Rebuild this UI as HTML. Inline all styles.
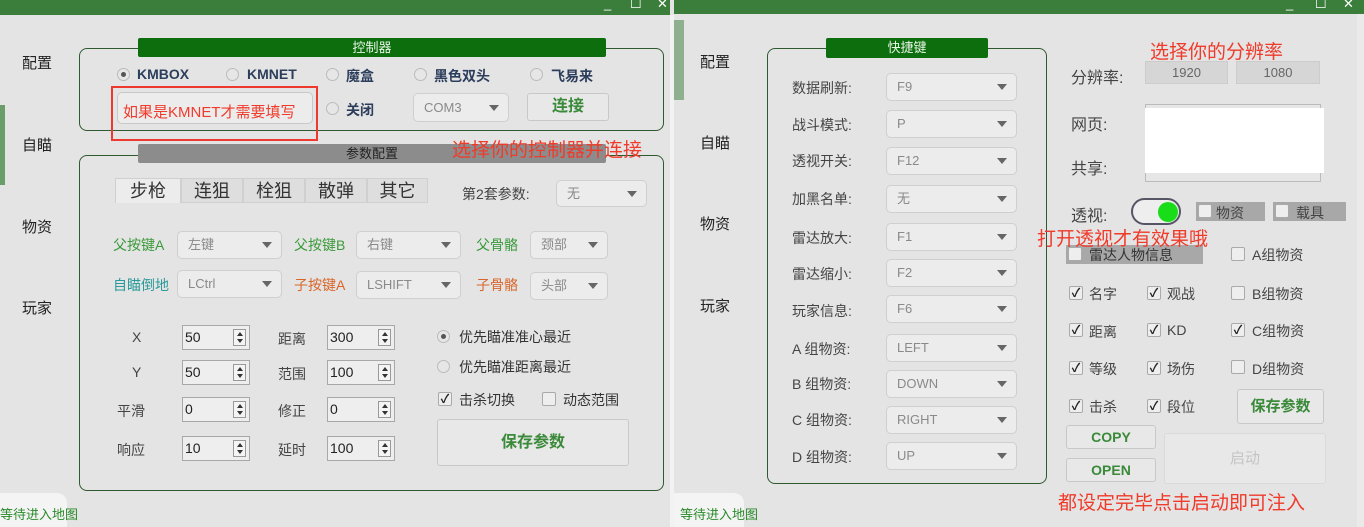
<!DOCTYPE html>
<html><head><meta charset="utf-8"><style>
*{box-sizing:border-box;margin:0;padding:0}
body{width:1364px;height:527px;overflow:hidden;background:#e4e4e4;position:relative;font-family:"Liberation Sans","Microsoft YaHei","Noto Sans CJK SC",sans-serif;font-size:14px;color:#333}
.a{position:absolute;white-space:nowrap}
.bar{background:#3b7d3b}
.grp{position:absolute;border:1.5px solid #2f5a2f;border-radius:8px}
.hdr{position:absolute;background:#0c6e0c;color:#e8f5e8;text-align:center;font-size:13px;line-height:19px;border-radius:2px}
.cb{position:absolute;background:#ececec;border:1px solid #cfcfcf;border-radius:5px;color:#8a8a8a;font-size:13px;padding-left:10px}
.cb::after{content:"";position:absolute;right:9px;top:50%;margin-top:-3px;border-left:5px solid transparent;border-right:5px solid transparent;border-top:6px solid #666}
.rd{position:absolute;width:13px;height:13px;border-radius:50%;border:1px solid #bbb;background:#e6e6e6}
.rd.on::after{content:"";position:absolute;left:3px;top:3px;width:5px;height:5px;border-radius:50%;background:#555}
.ck{position:absolute;width:14px;height:14px;border:1px solid #aaa;border-radius:2px;background:#eee;font-size:12px;line-height:12px;text-align:center;color:#222;font-weight:bold}
.btn{position:absolute;background:#e8e8e8;border:1px solid #c8c8c8;border-radius:3px;text-align:center;color:#3a8a3a;font-weight:bold}
.sp{position:absolute;width:68px;height:25px;background:#eee;border:1px solid #a8a8a8;font-size:14px;line-height:23px;padding-left:2px;color:#222}
.sp i{position:absolute;right:3px;top:3px;width:13px;height:17px;border:1px solid #999;background:#f4f4f4}
.sp i::before{content:"";position:absolute;left:3px;top:2px;border-left:3px solid transparent;border-right:3px solid transparent;border-bottom:4px solid #333}
.sp i::after{content:"";position:absolute;left:3px;bottom:2px;border-left:3px solid transparent;border-right:3px solid transparent;border-top:4px solid #333}
.red{color:#f03a2a;font-size:19px;z-index:5}
.side{font-size:15px;color:#222}
.lb{font-size:14px;color:#444}
.tab{position:absolute;top:178px;height:25px;background:#dedede;border:1px solid #d0d0d0;font-size:18px;color:#333;text-align:center;line-height:25px}
.wc{position:absolute;top:-4px;color:#fff;font-size:13px}
</style></head><body>
<!-- LEFT PANEL -->
<div class="a bar" style="left:0;top:0;width:670px;height:15px"></div>
<div class="wc" style="left:604px">_</div><div class="wc" style="left:630px">☐</div><div class="wc" style="left:657px">✕</div>
<div class="a" style="left:670px;top:15px;width:4px;height:512px;background:#f2f2f2"></div>
<div class="a" style="left:0;top:105px;width:5px;height:80px;background:#6a9d6a"></div>
<div class="a side" style="left:22px;top:52px">配置</div>
<div class="a side" style="left:22px;top:134px">自瞄</div>
<div class="a side" style="left:22px;top:216px">物资</div>
<div class="a side" style="left:22px;top:297px">玩家</div>

<div class="grp" style="left:79px;top:48px;width:585px;height:83px"></div>
<div class="hdr" style="left:138px;top:38px;width:468px;height:19px">控制器</div>
<div class="rd on" style="left:117px;top:68px"></div><div class="a" style="left:137px;top:66px;font-weight:bold;color:#2c3e5c">KMBOX</div>
<div class="rd" style="left:226px;top:68px"></div><div class="a" style="left:247px;top:66px;font-weight:bold;color:#2c3e5c">KMNET</div>
<div class="rd" style="left:326px;top:68px"></div><div class="a" style="left:346px;top:66px;font-weight:bold;color:#2c3e5c">魔盒</div>
<div class="rd" style="left:414px;top:68px"></div><div class="a" style="left:434px;top:66px;font-weight:bold;color:#2c3e5c">黑色双头</div>
<div class="rd" style="left:530px;top:68px"></div><div class="a" style="left:551px;top:66px;font-weight:bold;color:#2c3e5c">飞易来</div>
<div class="a" style="left:117px;top:92px;width:196px;height:32px;background:#ececec;border:1px solid #c8c8c8;border-radius:5px"></div>
<div class="a" style="left:111px;top:86px;width:207px;height:55px;border:2px solid #ee3a2e"></div>
<div class="a" style="left:123px;top:101px;color:#f03a2a;font-size:15px">如果是KMNET才需要填写</div>
<div class="rd" style="left:326px;top:102px"></div><div class="a" style="left:346px;top:100px;font-weight:bold;color:#2c3e5c">关闭</div>
<div class="cb" style="left:413px;top:93px;width:96px;height:29px;line-height:27px">COM3</div>
<div class="btn" style="left:527px;top:93px;width:82px;height:28px;line-height:26px;font-size:16px">连接</div>

<div class="grp" style="left:79px;top:155px;width:585px;height:336px"></div>
<div class="hdr" style="left:138px;top:144px;width:468px;height:19px;background:#8c8c8c;color:#222">参数配置</div>
<div class="a red" style="left:452px;top:135px">选择你的控制器并连接</div>
<div class="tab" style="left:115px;width:66px;background:#ececec;border-bottom:none">步枪</div>
<div class="tab" style="left:181px;width:62px">连狙</div>
<div class="tab" style="left:243px;width:62px">栓狙</div>
<div class="tab" style="left:305px;width:62px">散弹</div>
<div class="tab" style="left:367px;width:61px">其它</div>
<div class="a lb" style="left:462px;top:184px">第2套参数:</div>
<div class="cb" style="left:556px;top:180px;width:91px;height:27px;line-height:25px">无</div>

<div class="a" style="left:113px;top:235px;color:#3a9a3a">父按键A</div>
<div class="cb" style="left:177px;top:231px;width:105px;height:28px;line-height:26px">左键</div>
<div class="a" style="left:294px;top:235px;color:#3a9a3a">父按键B</div>
<div class="cb" style="left:356px;top:231px;width:105px;height:28px;line-height:26px">右键</div>
<div class="a" style="left:476px;top:235px;color:#3a9a3a">父骨骼</div>
<div class="cb" style="left:530px;top:231px;width:78px;height:28px;line-height:26px">颈部</div>
<div class="a" style="left:113px;top:275px;color:#2a9a9a">自瞄倒地</div>
<div class="cb" style="left:177px;top:270px;width:105px;height:28px;line-height:26px">LCtrl</div>
<div class="a" style="left:294px;top:275px;color:#d8662a">子按键A</div>
<div class="cb" style="left:356px;top:271px;width:105px;height:28px;line-height:26px">LSHIFT</div>
<div class="a" style="left:476px;top:275px;color:#d8662a">子骨骼</div>
<div class="cb" style="left:530px;top:272px;width:78px;height:28px;line-height:26px">头部</div>

<div class="a lb" style="left:132px;top:329px">X</div><div class="sp" style="left:182px;top:325px">50<i></i></div>
<div class="a lb" style="left:278px;top:329px">距离</div><div class="sp" style="left:327px;top:325px">300<i></i></div>
<div class="a lb" style="left:132px;top:364px">Y</div><div class="sp" style="left:182px;top:360px">50<i></i></div>
<div class="a lb" style="left:278px;top:364px">范围</div><div class="sp" style="left:327px;top:360px">100<i></i></div>
<div class="a lb" style="left:117px;top:401px">平滑</div><div class="sp" style="left:182px;top:397px">0<i></i></div>
<div class="a lb" style="left:278px;top:401px">修正</div><div class="sp" style="left:327px;top:397px">0<i></i></div>
<div class="a lb" style="left:117px;top:440px">响应</div><div class="sp" style="left:182px;top:436px">10<i></i></div>
<div class="a lb" style="left:278px;top:440px">延时</div><div class="sp" style="left:327px;top:436px">100<i></i></div>

<div class="rd on" style="left:437px;top:330px"></div><div class="a lb" style="left:459px;top:327px;color:#333">优先瞄准准心最近</div>
<div class="rd" style="left:437px;top:360px"></div><div class="a lb" style="left:459px;top:357px;color:#333">优先瞄准距离最近</div>
<div class="ck" style="left:438px;top:392px">✓</div><div class="a lb" style="left:459px;top:390px;color:#333">击杀切换</div>
<div class="ck" style="left:542px;top:392px"></div><div class="a lb" style="left:563px;top:390px;color:#333">动态范围</div>
<div class="btn" style="left:437px;top:419px;width:192px;height:47px;line-height:45px;font-size:16px">保存参数</div>

<div class="a" style="left:0;top:493px;width:67px;height:34px;background:#f4f4f4;border-radius:0 10px 0 0"></div>
<div class="a" style="left:0;top:504px;color:#2a8a2a;font-size:13px">等待进入地图</div>

<!-- RIGHT PANEL -->
<div class="a bar" style="left:674px;top:0;width:690px;height:14px"></div>
<div class="wc" style="left:1286px">_</div><div class="wc" style="left:1315px">☐</div><div class="wc" style="left:1343px">✕</div>
<div class="a" style="left:674px;top:20px;width:10px;height:80px;background:#8fb08f"></div>
<div class="a" style="left:1357px;top:14px;width:7px;height:513px;background:#eaeaea"></div>
<div class="a side" style="left:700px;top:51px">配置</div>
<div class="a side" style="left:700px;top:132px">自瞄</div>
<div class="a side" style="left:700px;top:213px">物资</div>
<div class="a side" style="left:700px;top:295px">玩家</div>

<div class="grp" style="left:767px;top:48px;width:280px;height:436px"></div>
<div class="hdr" style="left:826px;top:38px;width:162px;height:20px">快捷键</div>
<div class="a lb" style="left:792px;top:78px">数据刷新:</div><div class="cb" style="left:886px;top:73px;width:131px;height:28px;line-height:26px">F9</div>
<div class="a lb" style="left:792px;top:115px">战斗模式:</div><div class="cb" style="left:886px;top:110px;width:131px;height:28px;line-height:26px">P</div>
<div class="a lb" style="left:792px;top:151px">透视开关:</div><div class="cb" style="left:886px;top:147px;width:131px;height:28px;line-height:26px">F12</div>
<div class="a lb" style="left:792px;top:189px">加黑名单:</div><div class="cb" style="left:886px;top:185px;width:131px;height:28px;line-height:26px">无</div>
<div class="a lb" style="left:792px;top:228px">雷达放大:</div><div class="cb" style="left:886px;top:223px;width:131px;height:28px;line-height:26px">F1</div>
<div class="a lb" style="left:792px;top:264px">雷达缩小:</div><div class="cb" style="left:886px;top:259px;width:131px;height:28px;line-height:26px">F2</div>
<div class="a lb" style="left:792px;top:301px">玩家信息:</div><div class="cb" style="left:886px;top:295px;width:131px;height:28px;line-height:26px">F6</div>
<div class="a lb" style="left:792px;top:339px">A 组物资:</div><div class="cb" style="left:886px;top:334px;width:131px;height:28px;line-height:26px">LEFT</div>
<div class="a lb" style="left:792px;top:374px">B 组物资:</div><div class="cb" style="left:886px;top:370px;width:131px;height:28px;line-height:26px">DOWN</div>
<div class="a lb" style="left:792px;top:410px">C 组物资:</div><div class="cb" style="left:886px;top:406px;width:131px;height:28px;line-height:26px">RIGHT</div>
<div class="a lb" style="left:792px;top:447px">D 组物资:</div><div class="cb" style="left:886px;top:442px;width:131px;height:28px;line-height:26px">UP</div>

<div class="a red" style="left:1150px;top:37px">选择你的分辨率</div>
<div class="a" style="left:1071px;top:64px;font-size:16px;color:#444">分辨率:</div>
<div class="a" style="left:1145px;top:61px;width:83px;height:23px;background:#d6d6d6;border:1px solid #ccc;text-align:center;font-size:13px;color:#666;line-height:21px">1920</div>
<div class="a" style="left:1236px;top:61px;width:84px;height:23px;background:#d6d6d6;border:1px solid #ccc;text-align:center;font-size:13px;color:#666;line-height:21px">1080</div>
<div class="a" style="left:1071px;top:111px;font-size:16px;color:#444">网页:</div>
<div class="a" style="left:1145px;top:104px;width:176px;height:78px;border:1px solid #bbb;background:#e6e6e6"></div>
<div class="a" style="left:1145px;top:108px;width:179px;height:65px;background:#fff"></div>
<div class="a" style="left:1071px;top:155px;font-size:16px;color:#444">共享:</div>
<div class="a" style="left:1071px;top:202px;font-size:16px;color:#444">透视:</div>
<div class="a" style="left:1131px;top:198px;width:50px;height:27px;border:2px solid #556;border-radius:14px;background:#eee"></div>
<div class="a" style="left:1158px;top:202px;width:20px;height:20px;border-radius:50%;background:#18dd18"></div>
<div class="a" style="left:1196px;top:202px;width:69px;height:19px;background:#a8a8a8"></div><div class="ck" style="left:1198px;top:204px"></div><div class="a" style="left:1216px;top:203px;color:#444">物资</div>
<div class="a" style="left:1273px;top:202px;width:73px;height:19px;background:#a8a8a8"></div><div class="ck" style="left:1275px;top:204px"></div><div class="a" style="left:1296px;top:203px;color:#444">载具</div>
<div class="a red" style="left:1037px;top:224px">打开透视才有效果哦</div>
<div class="a" style="left:1066px;top:245px;width:137px;height:19px;background:#a8a8a8"></div><div class="ck" style="left:1068px;top:247px"></div><div class="a" style="left:1089px;top:245px;color:#333">雷达人物信息</div>
<div class="ck" style="left:1231px;top:247px"></div><div class="a" style="left:1252px;top:245px;color:#444">A组物资</div>

<div class="ck" style="left:1069px;top:286px">✓</div><div class="a" style="left:1089px;top:284px;color:#444">名字</div>
<div class="ck" style="left:1147px;top:286px">✓</div><div class="a" style="left:1167px;top:284px;color:#444">观战</div>
<div class="ck" style="left:1231px;top:286px"></div><div class="a" style="left:1252px;top:284px;color:#444">B组物资</div>
<div class="ck" style="left:1069px;top:323px">✓</div><div class="a" style="left:1089px;top:322px;color:#444">距离</div>
<div class="ck" style="left:1147px;top:323px">✓</div><div class="a" style="left:1167px;top:322px;color:#444">KD</div>
<div class="ck" style="left:1231px;top:323px">✓</div><div class="a" style="left:1252px;top:321px;color:#444">C组物资</div>
<div class="ck" style="left:1069px;top:361px">✓</div><div class="a" style="left:1089px;top:359px;color:#444">等级</div>
<div class="ck" style="left:1147px;top:361px">✓</div><div class="a" style="left:1167px;top:359px;color:#444">场伤</div>
<div class="ck" style="left:1231px;top:360px"></div><div class="a" style="left:1252px;top:359px;color:#444">D组物资</div>
<div class="ck" style="left:1069px;top:399px">✓</div><div class="a" style="left:1089px;top:397px;color:#444">击杀</div>
<div class="ck" style="left:1147px;top:399px">✓</div><div class="a" style="left:1167px;top:397px;color:#444">段位</div>
<div class="btn" style="left:1237px;top:389px;width:87px;height:35px;line-height:33px;font-size:15px">保存参数</div>
<div class="btn" style="left:1066px;top:425px;width:90px;height:24px;line-height:22px;font-size:14px">COPY</div>
<div class="btn" style="left:1066px;top:458px;width:90px;height:24px;line-height:22px;font-size:14px">OPEN</div>
<div class="btn" style="left:1164px;top:433px;width:162px;height:51px;line-height:49px;font-size:15px;color:#c4c4c4;font-weight:normal;border-color:#dadada">启动</div>
<div class="a red" style="left:1058px;top:488px">都设定完毕点击启动即可注入</div>

<div class="a" style="left:674px;top:493px;width:70px;height:34px;background:#f4f4f4;border-radius:0 10px 0 0"></div>
<div class="a" style="left:680px;top:504px;color:#2a8a2a;font-size:13px">等待进入地图</div>
</body></html>
